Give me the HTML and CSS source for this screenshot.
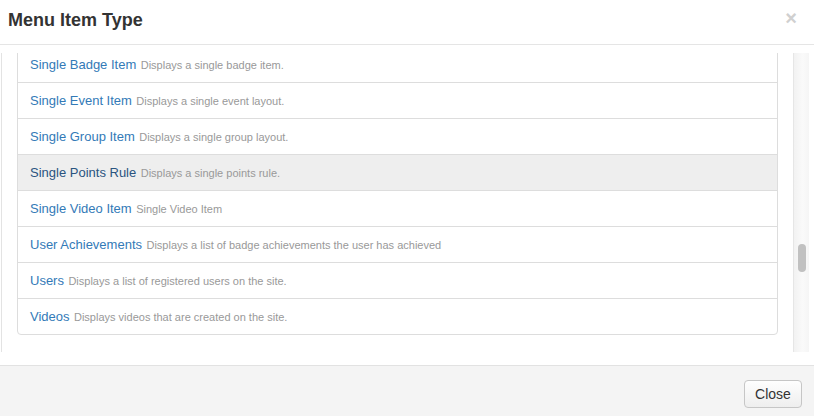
FILE: index.html
```html
<!DOCTYPE html>
<html lang="en">
<head>
  <meta charset="UTF-8">
  <title>Menu Item Type</title>
  <link rel="stylesheet" href="styles.css">
</head>
<body>
  <div class="modal">
    <div class="modal-header">
      <h3>Menu Item Type</h3>
      <span class="close">&times;</span>
    </div>

    <div class="modal-body">
      <div class="frame">
        <div class="frame-content">
          <div class="list-group">
            <div class="list-item"><a>Single Badge Item</a> <small>Displays a single badge item.</small></div>
            <div class="list-item"><a>Single Event Item</a> <small>Displays a single event layout.</small></div>
            <div class="list-item"><a>Single Group Item</a> <small>Displays a single group layout.</small></div>
            <div class="list-item active"><a>Single Points Rule</a> <small>Displays a single points rule.</small></div>
            <div class="list-item"><a>Single Video Item</a> <small>Single Video Item</small></div>
            <div class="list-item"><a>User Achievements</a> <small>Displays a list of badge achievements the user has achieved</small></div>
            <div class="list-item"><a>Users</a> <small>Displays a list of registered users on the site.</small></div>
            <div class="list-item"><a>Videos</a> <small>Displays videos that are created on the site.</small></div>
          </div>
        </div>
        <div class="scrollbar">
          <div class="thumb"></div>
        </div>
      </div>
    </div>

    <div class="modal-footer">
      <button>Close</button>
    </div>
  </div>
</body>
</html>
```

FILE: styles.css
```css
body {
  margin: 0;
  font-family: "Liberation Sans", Arial, sans-serif;
  background: #fff;
  color: #333;
}

.modal {
  width: 814px;
  height: 416px;
  display: flex;
  flex-direction: column;
}

.modal-header {
  height: 44px;
  border-bottom: 1px solid #e5e5e5;
  display: flex;
  align-items: center;
  justify-content: space-between;
  padding: 0 17px 0 8px;
}

.modal-header h3 {
  margin: 0;
  font-size: 18px;
  font-weight: bold;
  color: #333;
  position: relative;
  top: -2px;
}

.close {
  font-size: 20px;
  font-weight: bold;
  color: #d0d0d0;
  line-height: 1;
  position: relative;
  top: -4px;
}

.modal-body {
  padding: 8px 5px 13px 1px;
}

.frame {
  height: 299px;
  border-left: 1px solid #e3e3e3;
  display: flex;
}

.frame-content {
  flex: 1;
  overflow: hidden;
}

.list-group {
  margin: -7px 15px 0 15px;
  border: 1px solid #ddd;
  border-radius: 4px;
}

.list-item {
  height: 35px;
  line-height: 33px;
  padding: 0 12px 2px;
  box-sizing: border-box;
  border-top: 1px solid #ddd;
  white-space: nowrap;
}

.list-item:first-child {
  border-top: none;
  height: 35px;
}

.list-item + .list-item {
  height: 36px;
}

.list-item a {
  font-size: 13px;
  color: #337ab7;
}

.list-item small {
  font-size: 11px;
  color: #999;
}

.list-item.active {
  background: #eee;
}

.list-item.active a {
  color: #2a5480;
}

.scrollbar {
  width: 15px;
  border-left: 1px solid #e6e6e6;
  background: linear-gradient(to right, #f2f2f2, #fafafa 60%, #f5f5f5);
  position: relative;
}

.thumb {
  position: absolute;
  left: 4px;
  width: 8px;
  top: 191px;
  height: 28px;
  border-radius: 4px;
  background: #c1c1c1;
}

.modal-footer {
  flex: 1;
  background: #f4f4f4;
  border-top: 1px solid #e2e2e2;
  display: flex;
  justify-content: flex-end;
  align-items: flex-start;
  padding: 14px 12px 0 0;
}

.modal-footer button {
  width: 58px;
  height: 28px;
  font-family: "Liberation Sans", Arial, sans-serif;
  font-size: 14px;
  color: #333;
  border: 1px solid #c6c6c6;
  border-radius: 4px;
  background: linear-gradient(#fefefe, #eeeeee);
  padding: 0;
}
```
